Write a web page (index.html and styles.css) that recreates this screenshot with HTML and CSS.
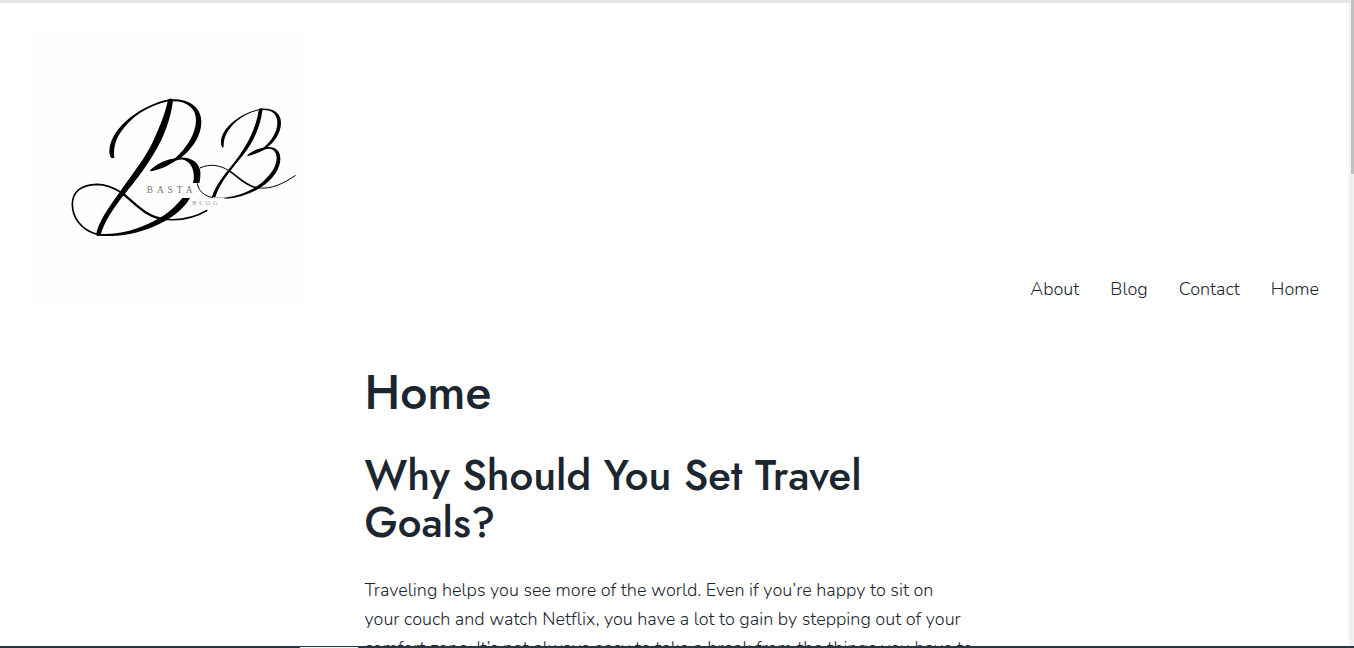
FILE: index.html
```html
<!DOCTYPE html>
<html lang="en">
<head>
<meta charset="utf-8">
<meta name="viewport" content="width=device-width, initial-scale=1">
<title>Home – Basta Blog</title>
<link rel="stylesheet" href="styles.css">
</head>
<body>
<div class="page">
  <header class="site-header">
    <a class="logo" href="#" aria-label="Basta Blog">
      <svg class="logo-art" viewBox="0 0 840 840" role="img" aria-label="Basta Blog">
        <rect class="logo-paper" x="9" y="9" width="810" height="810"/>
        <g class="ink">
          <path d="M414 209C422 203 428 206 429 212C423 255 412 292 394 330C378 362 362 388 340 420C318 450 302 470 281 496C247 540 223 575 211 617L198 615C205 575 235 535 265 492C308 430 345 387 371 330C389 290 406 250 414 209Z"/>
          <path d="M418 208C340 222 240 290 238 365C238 375 242 383 246 385L253 383C250 360 254 335 270 310C302 262 350 228 416 214Z"/>
          <path d="M425 208C480 205 514 235 514 275C514 325 475 370 442 390L432 388C470 355 498 310 498 270C498 235 470 212 425 214Z"/>
          <path d="M360 421C380 400 410 387 445 383C480 379 508 395 511 425C512 440 510 450 508 459L489 459C495 440 492 400 462 390C450 387 440 390 430 397C410 410 385 421 362 424Z"/>
          <path d="M457 504L480 504C460 540 420 570 370 590C315 612 265 622 200 617L200 611C260 617 320 600 372 573C415 552 440 525 457 504Z"/>
          <path d="M687 237C691 233 697 234 698 238C690 295 670 335 641 373C611 412 573 450 555 503L545 502C560 455 597 420 629 375C660 330 678 290 687 237Z"/>
          <path d="M690 237C630 248 573 295 573 335C573 345 575 350 577 353L581 351C580 330 586 315 596 300C618 269 650 248 690 240Z"/>
          <path d="M695 236C730 234 753 250 753 278C753 312 730 340 705 357L700 354C725 332 742 307 742 277C742 252 725 238 695 240Z"/>
          <path d="M652 376C665 364 682 356 705 352C735 347 752 362 751 388C749 430 710 468 665 487C635 500 610 506 583 506L583 503C625 500 665 483 695 458C725 432 739 410 740 385C740 360 722 352 706 358C688 367 672 374 653 378Z"/>
        </g>
        <g class="stroke">
          <path class="fine" d="M204 614C150 600 127 560 127 522C127 485 155 464 200 463C230 463 255 475 278 490"/>
          <path class="bold" d="M276 489C310 515 345 560 400 567"/>
          <path class="fine" d="M397 567C450 574 495 563 532 541"/>
          <path class="hair" d="M549 503C522 498 505 482 502 460M510 414C540 400 570 405 597 422"/>
          <path class="fine" d="M597 422C630 445 650 468 680 473"/>
          <path class="hair" d="M680 473C725 480 760 460 797 436"/>
        </g>
        <path class="mark" d="M548 503H584"/>
        <text class="word" x="350" y="490">BASTA</text>
        <text class="subword" x="487" y="524">BLOG</text>
      </svg>
    </a>
    <nav class="menu" aria-label="Primary">
      <a href="#">About</a>
      <a href="#">Blog</a>
      <a href="#">Contact</a>
      <a href="#">Home</a>
    </nav>
  </header>
  <main class="content">
    <h1>Home</h1>
    <h2>Why Should You Set Travel Goals?</h2>
    <p>Traveling helps you see more of the world. Even if you’re happy to sit on<br>your couch and watch Netflix, you have a lot to gain by stepping out of your<br>comfort zone. It’s not always easy to take a break from the things you have to</p>
  </main>
</div>
<div class="scroll-track"><div class="scroll-thumb"></div></div>
<div class="bottom-edge"><div class="bottom-tab"></div></div>
</body>
</html>
```
FILE: styles.css
```css
* { box-sizing: border-box; }
body {
  margin: 0;
  height: 100vh;
  overflow: hidden;
  display: grid;
  grid-template-columns: 1fr 5px;
  grid-template-rows: 1fr 2px;
  background: #fff;
  color: #1c2630;
  font-family: Nunito, "Open Sans", sans-serif;
  font-size: 18px;
  font-weight: 300;
}
.page {
  min-height: 0;
  overflow: hidden;
  border-top: 3px solid #e4e4e4;
}
.site-header {
  display: flex;
  justify-content: space-between;
  align-items: flex-end;
  padding: 27px 30px 0;
}
.logo { display: block; }
.logo-art { display: block; width: 280px; height: 280px; }
.logo-paper { fill: #fefefe; }
.ink { fill: #000; }
.stroke { fill: none; stroke: #000; }
.fine { stroke-width: 5; }
.bold { stroke-width: 7; }
.hair { stroke-width: 3; }
.mark { stroke: #bbb; stroke-width: 3; }
.word, .subword { font-family: "Liberation Serif", serif; font-weight: 400; }
.word { font-size: 28px; letter-spacing: 12px; fill: #777; }
.subword { font-size: 20px; letter-spacing: 7px; fill: #999; }
.menu {
  display: flex;
  gap: 31px;
  padding-bottom: 6px;
  line-height: 30px;
}
.menu a { color: inherit; text-decoration: none; }
.content {
  max-width: 620px;
  margin: 0 auto;
  padding-top: 54px;
}
h1, h2 {
  margin: 0;
  font-family: Jost, Lato, sans-serif;
  font-weight: 500;
}
h1 { font-size: 48px; line-height: 58px; }
h2 { margin-top: 30px; font-size: 42px; line-height: 47px; }
p { margin: 30px 0 0; line-height: 29px; }
.scroll-track { background: #f0f0f0; padding-left: 2px; }
.scroll-thumb { height: 27%; background: #c1c1c1; }
.bottom-edge {
  grid-column: 1 / -1;
  padding: 1px 0 0 300px;
  background: #263645;
}
.bottom-tab { width: 58px; height: 1px; background: #f2f5f7; }
```
